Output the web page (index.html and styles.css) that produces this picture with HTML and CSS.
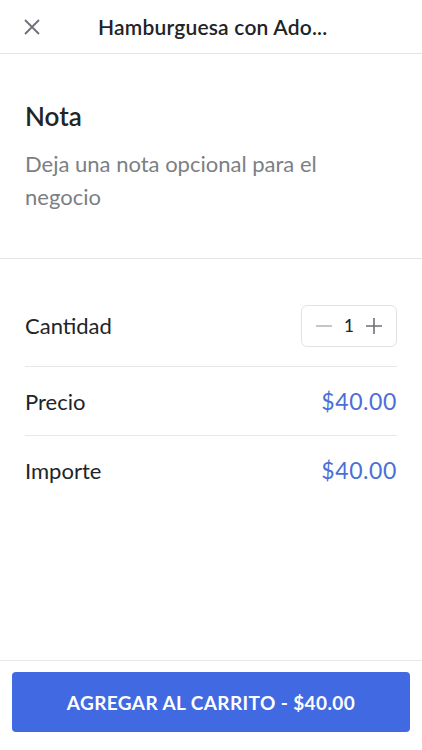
FILE: index.html
```html
<!DOCTYPE html>
<html>
<head>
	<title>Hamburguesa con Adobo</title>
	<link rel="stylesheet" href="styles.css">
</head>
<body>
	<div class="screen">
		<!-- Header -->
		<div class="header">
			<span class="close">
				<svg width="16" height="16" viewBox="0 0 16 16">
					<path d="M1 1 L15 15 M15 1 L1 15" stroke="#6d7076" stroke-width="1.8" fill="none" />
				</svg>
			</span>
			<span class="header__title">Hamburguesa con Ado...</span>
		</div>

		<!-- Nota -->
		<div class="note">
			<h2 class="note__title">Nota</h2>
			<p class="note__hint">Deja una nota opcional para el negocio</p>
		</div>

		<!-- Detalles -->
		<div class="details">
			<div class="row">
				<span class="row__label">Cantidad</span>
				<div class="stepper">
					<svg width="16" height="16" viewBox="0 0 16 16">
						<path d="M0 8 H16" stroke="#b4b7bc" stroke-width="1.6" />
					</svg>
					<span class="stepper__value">1</span>
					<svg width="16" height="16" viewBox="0 0 16 16">
						<path d="M0 8 H16 M8 0 V16" stroke="#6d7076" stroke-width="1.6" />
					</svg>
				</div>
			</div>
			<div class="row">
				<span class="row__label">Precio</span>
				<span class="row__price">$40.00</span>
			</div>
			<div class="row">
				<span class="row__label">Importe</span>
				<span class="row__price">$40.00</span>
			</div>
		</div>

		<!-- Footer -->
		<div class="footer">
			<button class="add-btn">AGREGAR AL CARRITO - $40.00</button>
		</div>
	</div>
</body>
</html>
```

FILE: styles.css
```css
body {
	margin: 0;
	font-family: Lato, "Noto Sans", sans-serif;
	color: #222427;
	background: #fff;
}

.screen {
	width: 422px;
	height: 750px;
	display: flex;
	flex-direction: column;
}

.header {
	height: 54px;
	display: flex;
	align-items: center;
	border-bottom: 1px solid #e3e4e6;
	box-sizing: border-box;
}

.close {
	width: 64px;
	display: flex;
	justify-content: center;
}

.close svg {
	display: block;
}

.header__title {
	margin-left: 34px;
	font-size: 21px;
	font-weight: 600;
	letter-spacing: 0.2px;
}

.note {
	padding: 46px 25px 45px;
	border-bottom: 1px solid #e3e4e6;
}

.note__title {
	margin: 0;
	font-size: 26px;
	font-weight: 600;
	line-height: 32px;
}

.note__hint {
	margin: 15px 0 0;
	width: 330px;
	font-size: 22px;
	line-height: 33px;
	color: #7b7f85;
}

.details {
	flex: 1;
	padding: 26px 25px 0;
}

.row {
	height: 68px;
	display: flex;
	align-items: center;
	justify-content: space-between;
	border-bottom: 1px solid #e6e7e9;
	font-size: 22px;
}

.row:first-child {
	height: 81px;
}

.row:last-child {
	border-bottom: none;
}

.row__price {
	color: #4a6fd8;
	font-size: 23px;
	letter-spacing: 0.6px;
}

.stepper {
	width: 96px;
	height: 42px;
	box-sizing: border-box;
	border: 1px solid #e1e2e4;
	border-radius: 6px;
	display: flex;
	align-items: center;
	justify-content: space-between;
	padding: 0 14px;
}

.stepper__value {
	font-size: 17px;
	font-weight: 500;
}

.footer {
	border-top: 1px solid #e6e7e9;
	padding: 11px 12px 18px;
}

.add-btn {
	width: 100%;
	height: 60px;
	background-color: #4169e1;
	color: #fff;
	border: none;
	border-radius: 4px;
	font-family: Lato, "Noto Sans", sans-serif;
	font-size: 19px;
	font-weight: 700;
	letter-spacing: 0.4px;
	cursor: pointer;
}
```
